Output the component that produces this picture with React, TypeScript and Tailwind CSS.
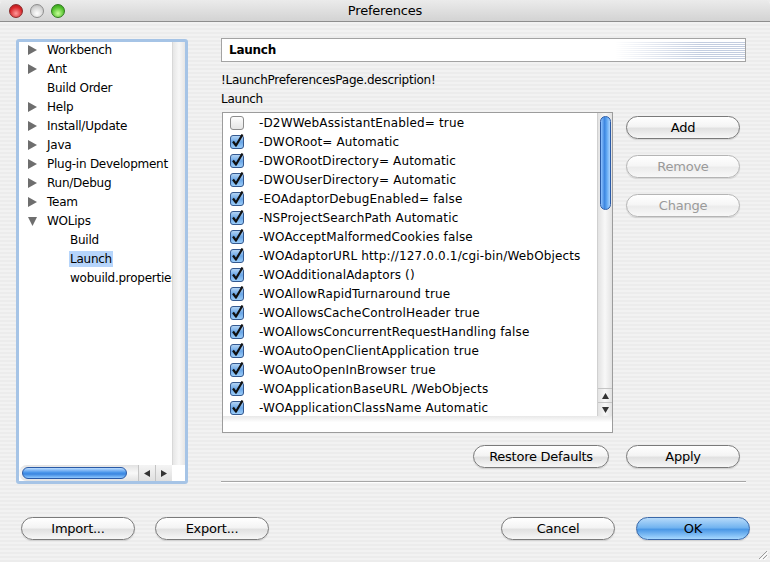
import React from "react";

const treeItems = [
  { label: "Workbench", arrow: "right", depth: 0 },
  { label: "Ant", arrow: "right", depth: 0 },
  { label: "Build Order", arrow: "none", depth: 0 },
  { label: "Help", arrow: "right", depth: 0 },
  { label: "Install/Update", arrow: "right", depth: 0 },
  { label: "Java", arrow: "right", depth: 0 },
  { label: "Plug-in Development", arrow: "right", depth: 0 },
  { label: "Run/Debug", arrow: "right", depth: 0 },
  { label: "Team", arrow: "right", depth: 0 },
  { label: "WOLips", arrow: "down", depth: 0 },
  { label: "Build", arrow: "none", depth: 1 },
  { label: "Launch", arrow: "none", depth: 1, selected: true },
  { label: "wobuild.properties", arrow: "none", depth: 1 },
];

const launchArgs = [
  { text: "-D2WWebAssistantEnabled= true", on: false },
  { text: "-DWORoot= Automatic", on: true },
  { text: "-DWORootDirectory= Automatic", on: true },
  { text: "-DWOUserDirectory= Automatic", on: true },
  { text: "-EOAdaptorDebugEnabled= false", on: true },
  { text: "-NSProjectSearchPath Automatic", on: true },
  { text: "-WOAcceptMalformedCookies false", on: true },
  { text: "-WOAdaptorURL http://127.0.0.1/cgi-bin/WebObjects", on: true },
  { text: "-WOAdditionalAdaptors ()", on: true },
  { text: "-WOAllowRapidTurnaround true", on: true },
  { text: "-WOAllowsCacheControlHeader true", on: true },
  { text: "-WOAllowsConcurrentRequestHandling false", on: true },
  { text: "-WOAutoOpenClientApplication true", on: true },
  { text: "-WOAutoOpenInBrowser true", on: true },
  { text: "-WOApplicationBaseURL /WebObjects", on: true },
  { text: "-WOApplicationClassName Automatic", on: true },
];

const btn =
  "h-[23px] rounded-full border text-[13px] flex items-center justify-center shadow-[0_1px_1px_rgba(0,0,0,0.12)]";
const btnNormal =
  "border-[#7a7a7a] text-black bg-[linear-gradient(to_bottom,#ffffff_0%,#f4f4f4_45%,#e1e1e1_55%,#f7f7f7_100%)]";
const btnDisabled =
  "border-[#b5b5b5] text-[#9a9a9a] bg-[linear-gradient(to_bottom,#ffffff_0%,#f6f6f6_45%,#ececec_55%,#f8f8f8_100%)]";
const btnPrimary =
  "border-[#3a68a8] text-black bg-[linear-gradient(to_bottom,#b6dafa_0%,#74b5f0_45%,#4b98e6_55%,#a6d8ff_100%)]";

function Checkbox({ on }: { on: boolean }) {
  return (
    <svg width="14" height="14" viewBox="0 0 14 14" className="shrink-0 overflow-visible">
      <defs>
        <linearGradient id="cbOn" x1="0" y1="0" x2="0" y2="1">
          <stop offset="0" stopColor="#b9d8f6" />
          <stop offset="0.5" stopColor="#6aa6e6" />
          <stop offset="1" stopColor="#9fd0fb" />
        </linearGradient>
        <linearGradient id="cbOff" x1="0" y1="0" x2="0" y2="1">
          <stop offset="0" stopColor="#ffffff" />
          <stop offset="0.5" stopColor="#f0f0f0" />
          <stop offset="1" stopColor="#e4e4e4" />
        </linearGradient>
      </defs>
      <rect x="0.5" y="0.5" width="13" height="13" rx="2.5" fill={on ? "url(#cbOn)" : "url(#cbOff)"} stroke={on ? "#35598f" : "#8c8c8c"} />
      {on && <path d="M3 6.5 L6 10.5 L12.5 -0.5" fill="none" stroke="#111" strokeWidth="2.2" strokeLinejoin="round" />}
    </svg>
  );
}

function Arrow({ dir }: { dir: string }) {
  if (dir === "none") return <span className="w-[9px] shrink-0" />;
  return (
    <svg width="9" height="10" viewBox="0 0 9 10" className="shrink-0">
      {dir === "right" ? <path d="M0 0 L9 5 L0 10 Z" fill="#6e6e6e" /> : <path d="M0 1 L9 1 L4.5 10 Z" fill="#6e6e6e" />}
    </svg>
  );
}

export default function App() {
  return (
    <div className="w-[770px] h-[562px] overflow-hidden flex flex-col font-['DejaVu_Sans',sans-serif] text-[12px] tracking-[-0.25px] text-black bg-[repeating-linear-gradient(0deg,#ececec_0px,#ececec_2px,#f2f2f2_2px,#f2f2f2_4px)]">
      {/* title bar */}
      <div className="h-[22px] shrink-0 relative flex items-center justify-center border-b border-[#8e8e8e] bg-[linear-gradient(to_bottom,#ebebeb,#d3d3d3)] rounded-t-[5px]">
        <div className="absolute left-[9px] top-[4px] flex gap-[7px]">
          <span className="w-[14px] h-[14px] rounded-full border border-[#8a2a2a] bg-[radial-gradient(circle_at_50%_70%,#ff9a9a,#d8262a_60%,#a81a1a)]" />
          <span className="w-[14px] h-[14px] rounded-full border border-[#8e8e8e] bg-[radial-gradient(circle_at_50%_70%,#ffffff,#d4d4d4_60%,#b0b0b0)]" />
          <span className="w-[14px] h-[14px] rounded-full border border-[#2f7a1e] bg-[radial-gradient(circle_at_50%_70%,#c8ff9a,#52c12c_60%,#2f8f1a)]" />
        </div>
        <span className="text-[13px] tracking-[-0.2px]">Preferences</span>
      </div>

      {/* main */}
      <div className="flex pl-[16px] pt-[16px]">
        {/* tree */}
        <div className="mt-px w-[172px] h-[445px] shrink-0 rounded-[3px] border-[3px] border-[#a6c4e6] flex flex-col bg-white">
          <div className="flex flex-1 min-h-0">
            <div className="w-[153px] overflow-hidden">
              <div className="-mt-[2px]">
                {treeItems.map((it) => (
                  <div key={it.label} className="h-[19px] flex items-center pl-[9px] whitespace-nowrap">
                    <Arrow dir={it.arrow} />
                    <span className={it.depth ? "ml-[33px]" : "ml-[10px]"}>
                      <span className={it.selected ? "bg-[#b6d5fb] px-px -mx-px py-px" : ""}>{it.label}</span>
                    </span>
                  </div>
                ))}
              </div>
            </div>
            <div className="w-[13px] border-l border-[#d8d8d8] bg-[linear-gradient(to_right,#e6e6e6,#f7f7f7_50%,#e6e6e6)]" />
          </div>
          <div className="h-[16px] flex shrink-0">
            <div className="w-[119px] flex items-center bg-[linear-gradient(to_bottom,#e3e3e3,#f8f8f8_50%,#e3e3e3)] rounded-l-full pl-[3px]">
              <div className="w-[105px] h-[12px] rounded-full border border-[#2a5aa6] bg-[linear-gradient(to_bottom,#bcdcff,#4b96ea_45%,#3a86e0_60%,#8fc8ff)]" />
            </div>
            <div className="w-[17px] flex items-center justify-center border-l border-[#c4c4c4] bg-[linear-gradient(to_bottom,#f4f4f4,#e0e0e0)]">
              <svg width="6" height="7" viewBox="0 0 6 7"><path d="M6 0 L0 3.5 L6 7 Z" fill="#333" /></svg>
            </div>
            <div className="w-[17px] flex items-center justify-center border-l border-[#c4c4c4] bg-[linear-gradient(to_bottom,#f4f4f4,#e0e0e0)]">
              <svg width="6" height="7" viewBox="0 0 6 7"><path d="M0 0 L6 3.5 L0 7 Z" fill="#333" /></svg>
            </div>
            <div className="flex-1 bg-white" />
          </div>
        </div>

        {/* right pane */}
        <div className="ml-[33px] w-[525px] flex flex-col">
          <div className="h-[24px] border border-[#a3a3a3] bg-white flex items-center relative overflow-hidden">
            <span className="pl-[7px] font-bold">Launch</span>
            <div className="absolute right-0 top-[2px] bottom-[2px] w-[130px] bg-[repeating-linear-gradient(0deg,#c3cde0_0px,#c3cde0_1px,transparent_1px,transparent_2px)] [mask-image:linear-gradient(to_right,transparent,black_65%)]" />
          </div>
          <div className="mt-[10px] leading-[17px]">!LaunchPreferencesPage.description!</div>
          <div className="mt-[2px] leading-[17px]">Launch</div>

          <div className="mt-[4px] flex">
            {/* list */}
            <div className="ml-px w-[391px] h-[321px] border border-[#9c9c9c] bg-white flex flex-col">
              <div className="flex h-[303px]">
                <div className="flex-1 overflow-hidden tracking-[0.15px]">
                  {launchArgs.map((a) => (
                    <div key={a.text} className="h-[19px] flex items-center pl-[7px] whitespace-nowrap">
                      <Checkbox on={a.on} />
                      <span className="ml-[15px]">{a.text}</span>
                    </div>
                  ))}
                </div>
                <div className="w-[15px] flex flex-col border-l border-[#d0d0d0] bg-[linear-gradient(to_right,#e2e2e2,#f8f8f8_50%,#e2e2e2)]">
                  <div className="pt-[3px] flex justify-center">
                    <div className="w-[11px] h-[94px] rounded-full border border-[#2a5aa6] bg-[linear-gradient(to_right,#8fc2ff,#3d86e0_40%,#5aa2f0_60%,#a9d4ff)]" />
                  </div>
                  <div className="flex-1" />
                  <div className="h-[14px] flex items-center justify-center border-t border-[#c4c4c4]">
                    <svg width="7" height="6" viewBox="0 0 7 6"><path d="M0 6 L3.5 0 L7 6 Z" fill="#333" /></svg>
                  </div>
                  <div className="h-[14px] flex items-center justify-center border-t border-[#c4c4c4]">
                    <svg width="7" height="6" viewBox="0 0 7 6"><path d="M0 0 L3.5 6 L7 0 Z" fill="#333" /></svg>
                  </div>
                </div>
              </div>
              <div className="flex-1 bg-[linear-gradient(to_bottom,#e8e8e8,#ffffff_40%)]" />
            </div>

            {/* side buttons */}
            <div className="ml-[13px] w-[114px] flex flex-col pt-[4px] gap-[16px]">
              <div className={`${btn} ${btnNormal}`}>Add</div>
              <div className={`${btn} ${btnDisabled}`}>Remove</div>
              <div className={`${btn} ${btnDisabled}`}>Change</div>
            </div>
          </div>

          <div className="mt-[12px] flex justify-end pr-[6px] gap-[17px]">
            <div className={`${btn} ${btnNormal} w-[136px]`}>Restore Defaults</div>
            <div className={`${btn} ${btnNormal} w-[114px]`}>Apply</div>
          </div>

          <div className="mt-[13px] h-[2px] border-t border-[#a6a6a6] bg-white" />
        </div>
      </div>

      {/* bottom buttons */}
      <div className="mt-[33px] flex items-center pl-[21px] pr-[20px]">
        <div className={`${btn} ${btnNormal} w-[114px]`}>Import...</div>
        <div className={`${btn} ${btnNormal} w-[114px] ml-[20px]`}>Export...</div>
        <div className="flex-1" />
        <div className={`${btn} ${btnNormal} w-[114px]`}>Cancel</div>
        <div className={`${btn} ${btnPrimary} w-[114px] ml-[21px]`}>OK</div>
      </div>
      <div className="flex-1 flex items-end justify-end pr-[2px] pb-[2px]">
        <svg width="11" height="11" viewBox="0 0 11 11">
          <path d="M10 2 L2 10 M10 6 L6 10" stroke="#9a9a9a" strokeWidth="1" />
          <path d="M11 3 L3 11 M11 7 L7 11" stroke="#ffffff" strokeWidth="1" />
        </svg>
      </div>
    </div>
  );
}
